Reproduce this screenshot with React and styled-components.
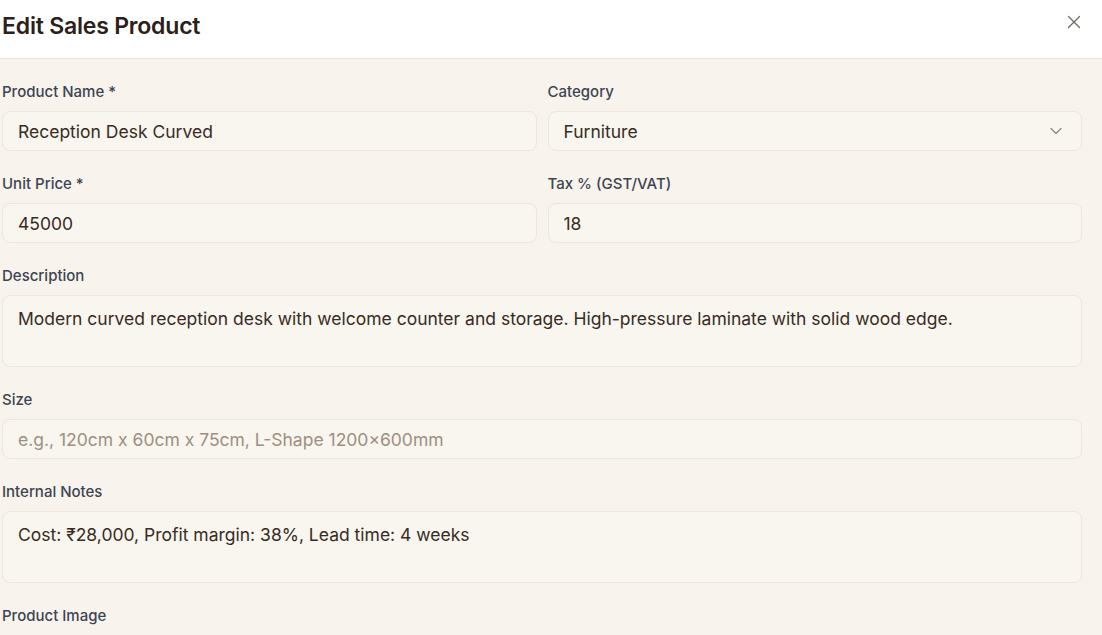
import React from "react";
import styled, { createGlobalStyle } from "styled-components";
import { X, ChevronDown } from "lucide-react";

const GlobalStyle = createGlobalStyle`
  html, body {
    margin: 0;
    padding: 0;
    background: #f8f4ed;
  }
  body {
    font-family: Inter, "Noto Sans", "Liberation Sans", sans-serif;
    -webkit-font-smoothing: antialiased;
  }
  * {
    box-sizing: border-box;
  }
`;

const Dialog = styled.div`
  width: 1102px;
  height: 635px;
  overflow: hidden;
  background: #f8f4ed;
`;

const Header = styled.div`
  height: 59px;
  background: #ffffff;
  border-bottom: 1px solid #e9e3d9;
  display: flex;
  justify-content: space-between;
  align-items: flex-start;
  padding: 12px 17px 0 2px;
`;

const Title = styled.h2`
  margin: 0;
  font-size: 23px;
  line-height: 28px;
  font-weight: 600;
  color: #2b2118;
  letter-spacing: -0.2px;
`;

const CloseButton = styled.button`
  border: none;
  background: none;
  padding: 0;
  margin-top: -1px;
  width: 22px;
  height: 22px;
  display: flex;
  color: #6f6861;
  cursor: pointer;
`;

const Body = styled.div`
  padding: 23px 20px 0 2px;
  display: flex;
  flex-direction: column;
  gap: 23px;
`;

const Row = styled.div`
  display: grid;
  grid-template-columns: 1fr 1fr;
  gap: 11px;
`;

const Field = styled.div`
  display: flex;
  flex-direction: column;
  gap: 9px;
`;

const Label = styled.label`
  font-size: 15px;
  line-height: 20px;
  font-weight: 500;
  color: #3d4452;
`;

const controlBase = `
  width: 100%;
  border: 1px solid #ece6dd;
  border-radius: 8px;
  background: #f9f5ef;
  font-family: Inter, "Noto Sans", "Liberation Sans", sans-serif;
  font-size: 17.5px;
  color: #372c23;
  outline: none;
  &::placeholder {
    color: #9c9082;
  }
`;

const Input = styled.input`
  ${controlBase}
  height: 40px;
  padding: 0 15px;
`;

const TextArea = styled.textarea`
  ${controlBase}
  height: 72px;
  padding: 11px 15px;
  line-height: 24px;
  resize: none;
`;

const SelectBox = styled.div`
  ${controlBase}
  height: 40px;
  padding: 0 15px;
  display: flex;
  align-items: center;
  justify-content: space-between;
`;

const Chevron = styled(ChevronDown)`
  color: #8a837c;
`;

const App = () => {
  return (
    <>
      <GlobalStyle />
      <Dialog>
        <Header>
          <Title>Edit Sales Product</Title>
          <CloseButton aria-label="Close">
            <X size={22} strokeWidth={1.4} />
          </CloseButton>
        </Header>

        <Body>
          <Row>
            <Field>
              <Label>Product Name *</Label>
              <Input defaultValue="Reception Desk Curved" />
            </Field>
            <Field>
              <Label>Category</Label>
              <SelectBox>
                <span>Furniture</span>
                <Chevron size={20} strokeWidth={1.4} />
              </SelectBox>
            </Field>
          </Row>

          <Row>
            <Field>
              <Label>Unit Price *</Label>
              <Input defaultValue="45000" />
            </Field>
            <Field>
              <Label>Tax % (GST/VAT)</Label>
              <Input defaultValue="18" />
            </Field>
          </Row>

          <Field>
            <Label>Description</Label>
            <TextArea defaultValue="Modern curved reception desk with welcome counter and storage. High-pressure laminate with solid wood edge." />
          </Field>

          <Field>
            <Label>Size</Label>
            <Input placeholder="e.g., 120cm x 60cm x 75cm, L-Shape 1200×600mm" />
          </Field>

          <Field>
            <Label>Internal Notes</Label>
            <TextArea defaultValue="Cost: ₹28,000, Profit margin: 38%, Lead time: 4 weeks" />
          </Field>

          <Field>
            <Label>Product Image</Label>
          </Field>
        </Body>
      </Dialog>
    </>
  );
};

export default App;
